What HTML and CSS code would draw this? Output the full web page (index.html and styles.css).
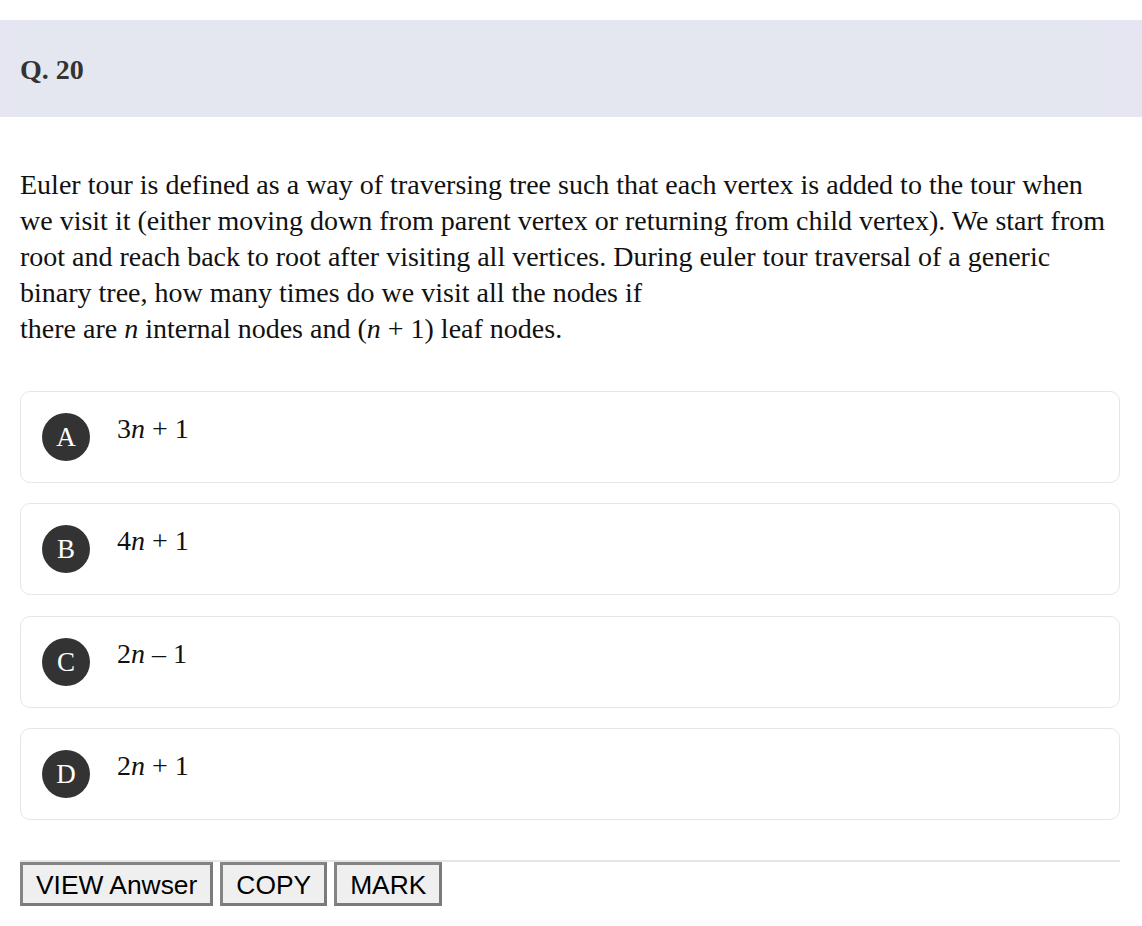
FILE: index.html
```html
<!DOCTYPE html>
<html>
<head>
<meta charset="utf-8">
<link rel="stylesheet" href="styles.css">
</head>
<body>
<div class="band">
  <div class="qhead">Q. 20</div>
</div>
<div class="content">
  <p class="question">Euler tour is defined as a way of traversing tree such that each vertex is added to the tour when we visit it (either moving down from parent vertex or returning from child vertex). We start from root and reach back to root after visiting all vertices. During euler tour traversal of a generic binary tree, how many times do we visit all the nodes if<br>there are <i>n</i> internal nodes and (<i>n</i> + 1) leaf nodes.</p>
  <div class="options">
    <div class="option"><span class="badge">A</span><span class="otext">3<i>n</i> + 1</span></div>
    <div class="option"><span class="badge">B</span><span class="otext">4<i>n</i> + 1</span></div>
    <div class="option"><span class="badge">C</span><span class="otext">2<i>n</i> – 1</span></div>
    <div class="option"><span class="badge">D</span><span class="otext">2<i>n</i> + 1</span></div>
  </div>
  <div class="actions">
    <button class="btn">VIEW Anwser</button>
    <button class="btn">COPY</button>
    <button class="btn">MARK</button>
  </div>
</div>
</body>
</html>
```
FILE: styles.css
```css
html, body {
  margin: 0;
  padding: 0;
  background: #ffffff;
}
body {
  font-family: "Liberation Serif", "Times New Roman", serif;
  color: #111;
  padding-top: 20px;
}
.band {
  background: #e5e6f2;
  height: 97px;
}
.qhead {
  margin-left: 20px;
  width: 1080px;
  height: 96px;
  padding-top: 3px;
  background: #e4e7ef;
  box-sizing: border-box;
  display: flex;
  align-items: center;
  font-weight: bold;
  font-size: 28px;
  color: #333;
}
.content {
  width: 1100px;
  margin-left: 20px;
}
.question {
  margin: 50px 0 0 0;
  font-size: 28px;
  line-height: 36px;
  color: #111;
}
.options {
  margin-top: 44px;
  display: flex;
  flex-direction: column;
  gap: 20.3px;
}
.option {
  border: 1px solid #e6e6e6;
  border-radius: 10px;
  height: 92px;
  box-sizing: border-box;
  padding: 19px 21px 20px;
  display: flex;
  align-items: flex-start;
}
.badge {
  width: 48px;
  height: 48px;
  margin-top: 2px;
  padding-top: 1px;
  box-sizing: border-box;
  border-radius: 50%;
  background: #333;
  color: #fff;
  font-size: 27px;
  display: flex;
  align-items: center;
  justify-content: center;
  flex-shrink: 0;
}
.otext {
  margin-left: 27px;
  font-size: 28px;
  line-height: 36px;
  color: #111;
}
.actions {
  margin-top: 40px;
  border-top: 2px solid #e6e6e6;
  display: flex;
  gap: 7px;
}
.btn {
  font-family: "Liberation Sans", Arial, sans-serif;
  font-size: 26.4px;
  color: #000;
  background: #efefef;
  border: 3px solid #7b7b7b;
  border-top-color: #858585;
  border-left-color: #858585;
  height: 44px;
  padding: 3px 13px 0;
  margin: 0;
  box-sizing: border-box;
}
```
